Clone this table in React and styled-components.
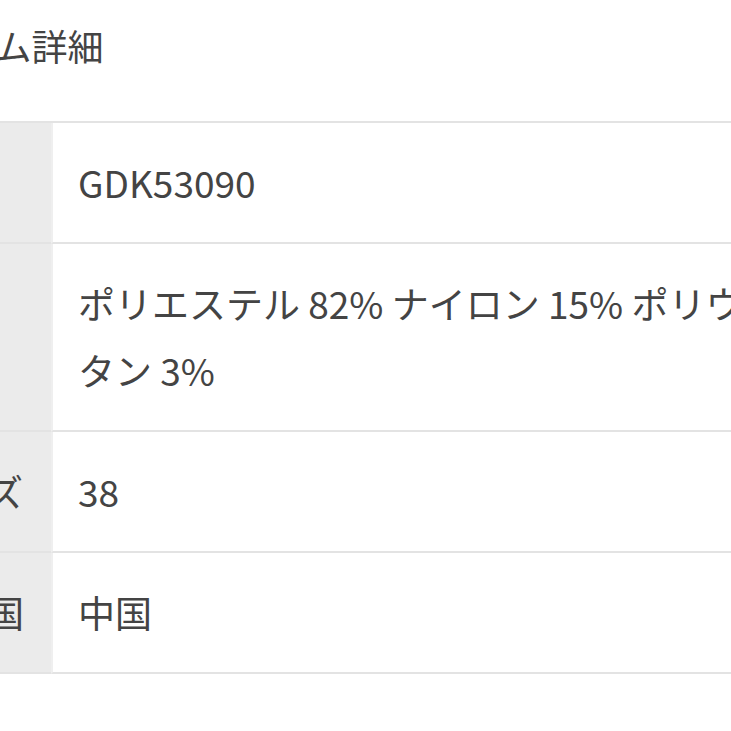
import React from "react";
import styled, { createGlobalStyle } from "styled-components";

const Global = createGlobalStyle`
  html, body {
    margin: 0;
    padding: 0;
    background: #ffffff;
  }
  body {
    overflow: hidden;
    font-family: "Noto Sans CJK JP", "Noto Sans", sans-serif;
    color: #444444;
  }
`;

const Viewport = styled.div`
  width: 731px;
  height: 731px;
  overflow: hidden;
`;

const Page = styled.section`
  width: 933px;
  margin-left: -109px;
  padding-top: 18px;
`;

const Title = styled.h2`
  margin: 0 0 49px 0;
  font-size: 36px;
  font-weight: 400;
  line-height: 54px;
  color: #444444;
`;

const Table = styled.dl`
  margin: 0;
  display: grid;
  grid-template-columns: 160px 1fr;
  border-top: 2px solid #e3e3e3;
`;

const Label = styled.dt`
  margin: 0;
  background: #ebebeb;
  padding: 26px 0 26px 22px;
  font-size: 37px;
  line-height: 67px;
  border-bottom: 2px solid #e3e3e3;
  white-space: nowrap;
`;

const Value = styled.dd`
  margin: 0;
  background: #ffffff;
  padding: 26px 29px 26px 25px;
  font-size: 37px;
  line-height: 67px;
  border-bottom: 2px solid #e3e3e3;
  border-left: 2px solid #efefef;
`;

const rows = [
  ["品番", "GDK53090"],
  ["素材", "ポリエステル 82% ナイロン 15% ポリウレタン 3%"],
  ["サイズ", "38"],
  ["原産国", "中国"],
];

export default function App() {
  return (
    <Viewport>
      <Global />
      <Page>
        <Title>アイテム詳細</Title>
        <Table>
          {rows.map(([k, v]) => (
            <React.Fragment key={k}>
              <Label>{k}</Label>
              <Value>{v}</Value>
            </React.Fragment>
          ))}
        </Table>
      </Page>
    </Viewport>
  );
}
